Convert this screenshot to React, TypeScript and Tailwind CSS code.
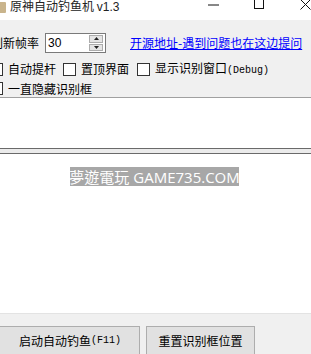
export default function App() {
  const cjk = { fontFamily: '"Noto Sans CJK SC", "Liberation Sans", sans-serif' };

  function Check() {
    return <span className="block w-[13px] h-[13px] shrink-0 bg-white border border-[#333333]" />;
  }

  return (
    <div className="w-[311px] h-[354px] overflow-hidden bg-white text-black text-[12px] leading-[12px]" style={cjk}>

      {/* Title bar */}
      <div className="h-[20px] bg-white flex items-start relative">
        <div className="w-[6px] h-[11px] mt-[2px] bg-[#c9b48c] rounded-r-[1px]" />
        <span className="ml-[4px] text-[12px] leading-[12px] text-[#222]">
          原神自动钓鱼机 <span style={{ fontFamily: '"Liberation Sans", sans-serif' }}>v1.3</span>
        </span>
        <svg className="absolute left-[208px] top-[4px]" width="11" height="2" viewBox="0 0 11 2">
          <line x1="0" y1="1" x2="11" y2="1" stroke="#111" strokeWidth="1" />
        </svg>
        <svg className="absolute left-[254px] top-[-1px]" width="10" height="10" viewBox="0 0 10 10">
          <rect x="0.5" y="0.5" width="9" height="9" fill="none" stroke="#111" strokeWidth="1" />
        </svg>
        <svg className="absolute left-[300px] top-[-1px]" width="11" height="11" viewBox="0 0 11 11">
          <path d="M0.5 0.5 L10.5 10.5 M10.5 0.5 L0.5 10.5" stroke="#111" strokeWidth="1" />
        </svg>
      </div>

      {/* Settings panel */}
      <div className="h-[78px] bg-[#f0f0f0] border-b border-[#a0a0a0] flex flex-col">
        <div className="mt-[13px] h-[20px] flex items-center">
          <span className="ml-[-9px] w-[48px] shrink-0">刷新帧率</span>
          <div className="ml-[6px] w-[61px] h-[20px] bg-white border border-[#7a7a7a] flex items-center">
            <span className="ml-[2px] flex-1" style={{ fontFamily: '"Liberation Sans", sans-serif' }}>30</span>
            <div className="w-[14px] h-[16px] mr-[2px] flex flex-col gap-[1px]">
              <div className="flex-1 bg-[#e5e5e5] border border-[#acacac] flex items-center justify-center">
                <svg width="5" height="3" viewBox="0 0 5 3"><path d="M0 3 L2.5 0 L5 3 Z" fill="#222" /></svg>
              </div>
              <div className="flex-1 bg-[#e5e5e5] border border-[#acacac] flex items-center justify-center">
                <svg width="5" height="3" viewBox="0 0 5 3"><path d="M0 0 L5 0 L2.5 3 Z" fill="#222" /></svg>
              </div>
            </div>
          </div>
          <a className="ml-[24px] text-[#0000ff] underline whitespace-nowrap">开源地址-遇到问题也在这边提问</a>
        </div>

        <div className="mt-[9px] h-[14px] flex items-center whitespace-nowrap">
          <div className="ml-[-10px]"><Check /></div>
          <span className="ml-[5px]">自动提杆</span>
          <div className="ml-[7px]"><Check /></div>
          <span className="ml-[5px]">置顶界面</span>
          <div className="ml-[8px]"><Check /></div>
          <span className="ml-[5px]">
            显示识别窗口<span className="text-[10px]" style={{ fontFamily: '"Liberation Mono", monospace' }}>(Debug)</span>
          </span>
        </div>

        <div className="mt-[6px] h-[13px] flex items-center whitespace-nowrap">
          <div className="ml-[-10px]"><Check /></div>
          <span className="ml-[5px]">一直隐藏识别框</span>
        </div>
      </div>

      {/* Upper white area */}
      <div className="h-[50px] bg-white" />

      {/* Splitter */}
      <div className="h-[6px] bg-[#ebebeb] border-y border-[#6a6a6a]" />

      {/* Lower white area */}
      <div className="h-[160px] bg-white border-b border-[#e3e3e3] pt-[13px]">
        <div className="ml-[70px] w-[169px] h-[19px] bg-[#a7a7a7] text-white flex items-center justify-center whitespace-nowrap text-[15px]" style={{ fontFamily: '"Noto Sans CJK TC", "Open Sans", sans-serif' }}>
          夢遊電玩 <span className="ml-[4px]" style={{ fontFamily: '"Open Sans", sans-serif' }}>GAME735.COM</span>
        </div>
      </div>

      {/* Buttons */}
      <div className="h-[40px] bg-[#f0f0f0] pt-[12px] flex items-start">
        <button className="ml-[-10px] w-[150px] h-[30px] bg-[#e1e1e1] border border-[#adadad] flex items-center justify-center whitespace-nowrap pl-[10px]">
          启动自动钓鱼<span className="text-[10px]" style={{ fontFamily: '"Liberation Mono", monospace' }}>(F11)</span>
        </button>
        <button className="ml-[6px] w-[109px] h-[30px] bg-[#e1e1e1] border border-[#adadad] flex items-center justify-center whitespace-nowrap">
          重置识别框位置
        </button>
      </div>
    </div>
  );
}
